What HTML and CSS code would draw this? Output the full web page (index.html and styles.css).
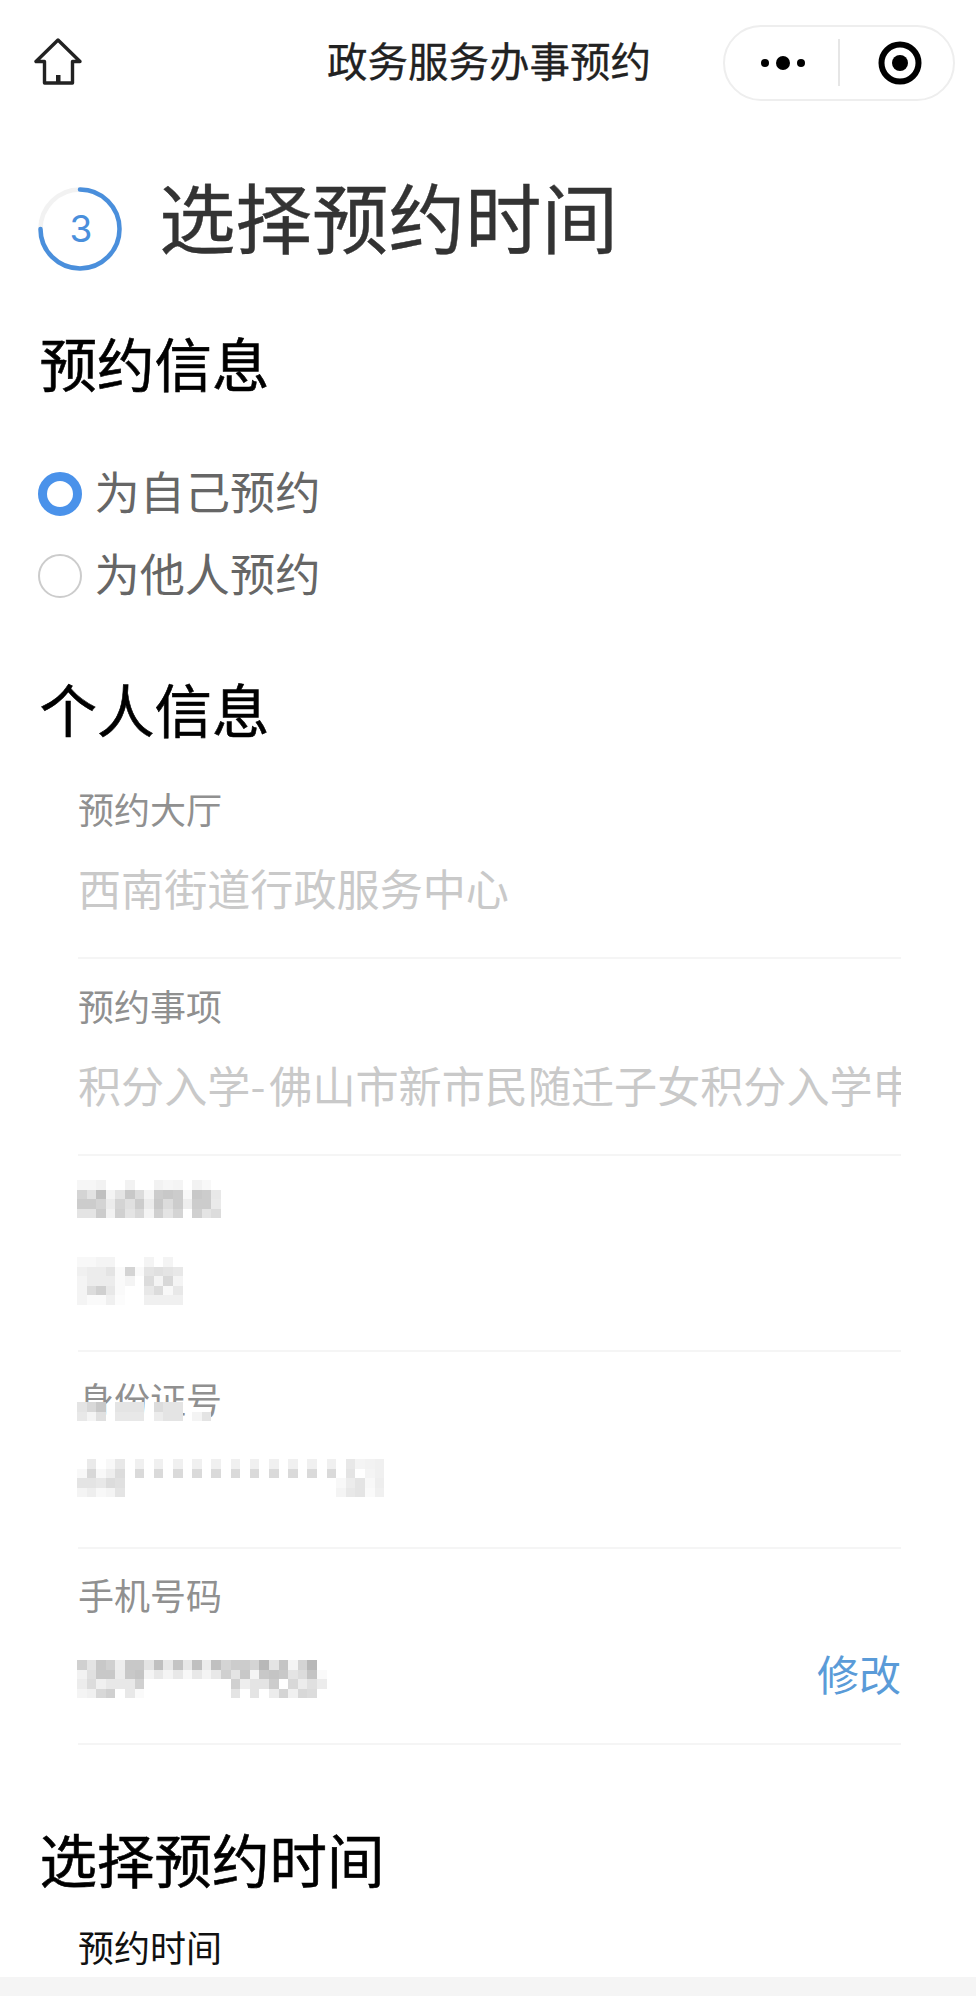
FILE: index.html
```html
<!DOCTYPE html>
<html lang="zh-CN">
<head>
<meta charset="utf-8">
<title>政务服务办事预约</title>
<link rel="stylesheet" href="styles.css">
</head>
<body>
<div class="page">
  <header class="navbar">
    <svg class="home-icon" viewBox="0 0 50 48" width="50" height="48" aria-hidden="true">
      <path class="home-outline" d="M25 2 L3 23.5 H11.5 V45 H39.5 V23.5 H47 Z"/>
      <rect class="home-door" x="23" y="37" width="4.5" height="8"/>
    </svg>
    <div class="nav-title">政务服务办事预约</div>
    <div class="capsule">
      <svg class="capsule-dots" viewBox="0 0 48 16" width="48" height="16" aria-hidden="true">
        <circle cx="6" cy="8" r="4"/><circle cx="24" cy="8" r="7"/><circle cx="42" cy="8" r="4"/>
      </svg>
      <span class="capsule-sep"></span>
      <svg class="capsule-target" viewBox="0 0 44 44" width="44" height="44" aria-hidden="true">
        <circle class="target-ring" cx="22" cy="22" r="18.5"/><circle cx="22" cy="22" r="8"/>
      </svg>
    </div>
  </header>

  <div class="step">
    <svg class="step-ring" viewBox="0 0 84 84" width="84" height="84" aria-hidden="true">
      <circle class="ring-track" cx="42" cy="42" r="39.5"/>
      <path class="ring-arc" d="M42 2.5 A39.5 39.5 0 1 1 2.5 42"/>
      <text class="ring-num" x="43" y="55">3</text>
    </svg>
    <h1 class="step-title">选择预约时间</h1>
  </div>

  <h2 class="section-title section-first">预约信息</h2>
  <div class="radio-group">
    <div class="radio-row"><span class="radio radio-on"></span><span class="radio-text">为自己预约</span></div>
    <div class="radio-row"><span class="radio"></span><span class="radio-text">为他人预约</span></div>
  </div>

  <h2 class="section-title section-personal">个人信息</h2>
  <div class="fields">
    <div class="field">
      <div class="field-label">预约大厅</div>
      <div class="field-value">西南街道行政服务中心</div>
    </div>
    <div class="field">
      <div class="field-label">预约事项</div>
      <div class="field-value">积分入学<span class="dash">-</span>佛山市新市民随迁子女积分入学申请</div>
    </div>
    <div class="field">
      <div class="field-label"></div>
      <div class="field-value"></div>
      <svg class="mosaic m1" viewBox="0 0 15 4" aria-hidden="true">
        <rect x="0" y="0" fill="#f6f6f6"/><rect x="1" y="0" fill="#f6f6f6"/><rect x="2" y="0" fill="#f2f2f2"/><rect x="5" y="0" fill="#f2f2f2"/><rect x="8" y="0" fill="#f2f2f2"/><rect x="9" y="0" fill="#f6f6f6"/><rect x="10" y="0" fill="#f4f4f4"/><rect x="12" y="0" fill="#f2f2f2"/><rect x="13" y="0" fill="#f8f8f8"/>
        <rect x="0" y="1" fill="#d4d4d4"/><rect x="1" y="1" fill="#e2e2e2"/><rect x="2" y="1" fill="#c0c0c0"/><rect x="3" y="1" fill="#f4f4f4"/><rect x="4" y="1" fill="#e4e4e4"/><rect x="5" y="1" fill="#c8c8c8"/><rect x="6" y="1" fill="#dcdcdc"/><rect x="7" y="1" fill="#f4f4f4"/><rect x="8" y="1" fill="#cccccc"/><rect x="9" y="1" fill="#c8c8c8"/><rect x="10" y="1" fill="#cccccc"/><rect x="11" y="1" fill="#f8f8f8"/><rect x="12" y="1" fill="#c8c8c8"/><rect x="13" y="1" fill="#cccccc"/><rect x="14" y="1" fill="#e8e8e8"/>
        <rect x="0" y="2" fill="#cccccc"/><rect x="1" y="2" fill="#cccccc"/><rect x="2" y="2" fill="#d4d4d4"/><rect x="3" y="2" fill="#ececec"/><rect x="4" y="2" fill="#d4d4d4"/><rect x="5" y="2" fill="#e0e0e0"/><rect x="6" y="2" fill="#cccccc"/><rect x="7" y="2" fill="#ececec"/><rect x="8" y="2" fill="#c8c8c8"/><rect x="9" y="2" fill="#dcdcdc"/><rect x="10" y="2" fill="#cccccc"/><rect x="11" y="2" fill="#eeeeee"/><rect x="12" y="2" fill="#cccccc"/><rect x="13" y="2" fill="#cccccc"/><rect x="14" y="2" fill="#eaeaea"/>
        <rect x="0" y="3" fill="#e4e4e4"/><rect x="1" y="3" fill="#e4e4e4"/><rect x="2" y="3" fill="#cccccc"/><rect x="3" y="3" fill="#f2f2f2"/><rect x="4" y="3" fill="#d0d0d0"/><rect x="5" y="3" fill="#e4e4e4"/><rect x="6" y="3" fill="#d8d8d8"/><rect x="7" y="3" fill="#f4f4f4"/><rect x="8" y="3" fill="#d0d0d0"/><rect x="9" y="3" fill="#e4e4e4"/><rect x="10" y="3" fill="#d4d4d4"/><rect x="12" y="3" fill="#d0d0d0"/><rect x="13" y="3" fill="#e4e4e4"/><rect x="14" y="3" fill="#dcdcdc"/>
      </svg>
      <svg class="mosaic m2" viewBox="0 0 11 5" aria-hidden="true">
        <rect x="0" y="0" fill="#f8f8f8"/><rect x="1" y="0" fill="#f8f8f8"/><rect x="2" y="0" fill="#f4f4f4"/><rect x="3" y="0" fill="#f4f4f4"/><rect x="7" y="0" fill="#f4f4f4"/><rect x="9" y="0" fill="#f4f4f4"/>
        <rect x="0" y="1" fill="#f0f0f0"/><rect x="1" y="1" fill="#ececec"/><rect x="2" y="1" fill="#ececec"/><rect x="3" y="1" fill="#e4e4e4"/><rect x="4" y="1" fill="#fafafa"/><rect x="5" y="1" fill="#d4d4d4"/><rect x="6" y="1" fill="#fafafa"/><rect x="7" y="1" fill="#e4e4e4"/><rect x="8" y="1" fill="#e0e0e0"/><rect x="9" y="1" fill="#e4e4e4"/><rect x="10" y="1" fill="#e8e8e8"/>
        <rect x="0" y="2" fill="#f4f4f4"/><rect x="1" y="2" fill="#ececec"/><rect x="2" y="2" fill="#ececec"/><rect x="3" y="2" fill="#ececec"/><rect x="4" y="2" fill="#fafafa"/><rect x="5" y="2" fill="#f4f4f4"/><rect x="7" y="2" fill="#dcdcdc"/><rect x="8" y="2" fill="#f4f4f4"/><rect x="9" y="2" fill="#d8d8d8"/><rect x="10" y="2" fill="#f4f4f4"/>
        <rect x="0" y="3" fill="#f4f4f4"/><rect x="1" y="3" fill="#dcdcdc"/><rect x="2" y="3" fill="#d0d0d0"/><rect x="3" y="3" fill="#e8e8e8"/><rect x="4" y="3" fill="#fafafa"/><rect x="7" y="3" fill="#e8e8e8"/><rect x="8" y="3" fill="#dcdcdc"/><rect x="9" y="3" fill="#f8f8f8"/><rect x="10" y="3" fill="#e8e8e8"/>
        <rect x="0" y="4" fill="#f4f4f4"/><rect x="1" y="4" fill="#fafafa"/><rect x="2" y="4" fill="#fafafa"/><rect x="3" y="4" fill="#f0f0f0"/><rect x="4" y="4" fill="#fcfcfc"/><rect x="7" y="4" fill="#f0f0f0"/><rect x="8" y="4" fill="#f0f0f0"/><rect x="9" y="4" fill="#f0f0f0"/><rect x="10" y="4" fill="#f0f0f0"/>
      </svg>
    </div>
    <div class="field">
      <div class="field-label">身份证号</div>
      <div class="field-value"></div>
      <svg class="mosaic m3" viewBox="0 0 14 2" aria-hidden="true">
        <rect x="0" y="0" fill="#e4e4e4"/><rect x="1" y="0" fill="#d8d8d8"/><rect x="2" y="0" fill="#c8c8c8"/><rect x="4" y="0" fill="#e4e4e4"/><rect x="5" y="0" fill="#e4e4e4"/><rect x="6" y="0" fill="#e4e4e4"/><rect x="8" y="0" fill="#dcdcdc"/><rect x="9" y="0" fill="#e4e4e4"/><rect x="10" y="0" fill="#e4e4e4"/>
        <rect x="0" y="1" fill="#e8e8e8"/><rect x="1" y="1" fill="#f4f4f4"/><rect x="2" y="1" fill="#e0e0e0"/><rect x="4" y="1" fill="#e8e8e8"/><rect x="5" y="1" fill="#e8e8e8"/><rect x="6" y="1" fill="#e8e8e8"/><rect x="8" y="1" fill="#ececec"/><rect x="9" y="1" fill="#e4e4e4"/><rect x="10" y="1" fill="#e4e4e4"/><rect x="12" y="1" fill="#f4f4f4"/><rect x="13" y="1" fill="#e4e4e4"/>
      </svg>
      <svg class="mosaic m4" viewBox="0 0 32 4" aria-hidden="true">
        <rect x="1" y="0" fill="#eaeaea"/><rect x="3" y="0" fill="#f8f8f8"/><rect x="4" y="0" fill="#e8e8e8"/><rect x="6" y="0" fill="#f0f0f0"/><rect x="8" y="0" fill="#f0f0f0"/><rect x="10" y="0" fill="#f0f0f0"/><rect x="12" y="0" fill="#f0f0f0"/><rect x="14" y="0" fill="#f0f0f0"/><rect x="16" y="0" fill="#f0f0f0"/><rect x="18" y="0" fill="#f0f0f0"/><rect x="20" y="0" fill="#f0f0f0"/><rect x="22" y="0" fill="#f0f0f0"/><rect x="24" y="0" fill="#f0f0f0"/><rect x="26" y="0" fill="#f0f0f0"/><rect x="28" y="0" fill="#e8e8e8"/><rect x="29" y="0" fill="#f4f4f4"/><rect x="30" y="0" fill="#f2f2f2"/><rect x="31" y="0" fill="#f0f0f0"/>
        <rect x="0" y="1" fill="#f8f8f8"/><rect x="1" y="1" fill="#d8d8d8"/><rect x="2" y="1" fill="#f8f8f8"/><rect x="3" y="1" fill="#eeeeee"/><rect x="4" y="1" fill="#dcdcdc"/><rect x="6" y="1" fill="#dadada"/><rect x="8" y="1" fill="#dadada"/><rect x="10" y="1" fill="#dadada"/><rect x="12" y="1" fill="#dadada"/><rect x="14" y="1" fill="#dadada"/><rect x="16" y="1" fill="#dadada"/><rect x="18" y="1" fill="#dadada"/><rect x="20" y="1" fill="#dadada"/><rect x="22" y="1" fill="#dadada"/><rect x="24" y="1" fill="#dadada"/><rect x="26" y="1" fill="#dadada"/><rect x="28" y="1" fill="#e4e4e4"/><rect x="30" y="1" fill="#f4f4f4"/><rect x="31" y="1" fill="#f0f0f0"/>
        <rect x="0" y="2" fill="#e4e4e4"/><rect x="1" y="2" fill="#e4e4e4"/><rect x="2" y="2" fill="#e8e8e8"/><rect x="3" y="2" fill="#dcdcdc"/><rect x="4" y="2" fill="#e0e0e0"/><rect x="27" y="2" fill="#f8f8f8"/><rect x="28" y="2" fill="#ececec"/><rect x="29" y="2" fill="#e4e4e4"/><rect x="30" y="2" fill="#f8f8f8"/><rect x="31" y="2" fill="#eeeeee"/>
        <rect x="0" y="3" fill="#f4f4f4"/><rect x="1" y="3" fill="#eeeeee"/><rect x="2" y="3" fill="#f8f8f8"/><rect x="3" y="3" fill="#f4f4f4"/><rect x="4" y="3" fill="#e4e4e4"/><rect x="27" y="3" fill="#f4f4f4"/><rect x="28" y="3" fill="#e8e8e8"/><rect x="29" y="3" fill="#e4e4e4"/><rect x="30" y="3" fill="#fafafa"/><rect x="31" y="3" fill="#f0f0f0"/>
      </svg>
    </div>
    <div class="field">
      <div class="field-label">手机号码</div>
      <div class="field-value field-value-row"><span></span><span class="field-action">修改</span></div>
      <svg class="mosaic m5" viewBox="0 0 26 4" aria-hidden="true">
        <rect x="0" y="0" fill="#d0d0d0"/><rect x="1" y="0" fill="#e4e4e4"/><rect x="2" y="0" fill="#c8c8c8"/><rect x="3" y="0" fill="#d0d0d0"/><rect x="4" y="0" fill="#eeeeee"/><rect x="5" y="0" fill="#c8c8c8"/><rect x="6" y="0" fill="#c8c8c8"/><rect x="7" y="0" fill="#e4e4e4"/><rect x="8" y="0" fill="#c0c0c0"/><rect x="9" y="0" fill="#e8e8e8"/><rect x="10" y="0" fill="#c4c4c4"/><rect x="11" y="0" fill="#e8e8e8"/><rect x="12" y="0" fill="#c0c0c0"/><rect x="13" y="0" fill="#ececec"/><rect x="14" y="0" fill="#c0c0c0"/><rect x="15" y="0" fill="#d4d4d4"/><rect x="16" y="0" fill="#cccccc"/><rect x="17" y="0" fill="#cccccc"/><rect x="18" y="0" fill="#d4d4d4"/><rect x="19" y="0" fill="#b8b8b8"/><rect x="20" y="0" fill="#e4e4e4"/><rect x="21" y="0" fill="#c4c4c4"/><rect x="22" y="0" fill="#f4f4f4"/><rect x="23" y="0" fill="#d4d4d4"/><rect x="24" y="0" fill="#b8b8b8"/>
        <rect x="0" y="1" fill="#f2f2f2"/><rect x="1" y="1" fill="#e0e0e0"/><rect x="2" y="1" fill="#c8c8c8"/><rect x="3" y="1" fill="#c8c8c8"/><rect x="4" y="1" fill="#ececec"/><rect x="5" y="1" fill="#c8c8c8"/><rect x="6" y="1" fill="#c4c4c4"/><rect x="7" y="1" fill="#f4f4f4"/><rect x="8" y="1" fill="#e8e8e8"/><rect x="9" y="1" fill="#f4f4f4"/><rect x="10" y="1" fill="#e8e8e8"/><rect x="11" y="1" fill="#f8f8f8"/><rect x="12" y="1" fill="#e8e8e8"/><rect x="13" y="1" fill="#f4f4f4"/><rect x="14" y="1" fill="#e8e8e8"/><rect x="15" y="1" fill="#d0d0d0"/><rect x="16" y="1" fill="#e4e4e4"/><rect x="17" y="1" fill="#c8c8c8"/><rect x="18" y="1" fill="#f4f4f4"/><rect x="19" y="1" fill="#c8c8c8"/><rect x="20" y="1" fill="#c4c4c4"/><rect x="21" y="1" fill="#c8c8c8"/><rect x="22" y="1" fill="#e4e4e4"/><rect x="23" y="1" fill="#dcdcdc"/><rect x="24" y="1" fill="#c4c4c4"/><rect x="25" y="1" fill="#fafafa"/>
        <rect x="0" y="2" fill="#ececec"/><rect x="1" y="2" fill="#dcdcdc"/><rect x="2" y="2" fill="#f0f0f0"/><rect x="3" y="2" fill="#e8e8e8"/><rect x="4" y="2" fill="#e8e8e8"/><rect x="5" y="2" fill="#e8e8e8"/><rect x="6" y="2" fill="#d0d0d0"/><rect x="16" y="2" fill="#d0d0d0"/><rect x="17" y="2" fill="#eeeeee"/><rect x="18" y="2" fill="#e4e4e4"/><rect x="19" y="2" fill="#e4e4e4"/><rect x="20" y="2" fill="#cccccc"/><rect x="22" y="2" fill="#d8d8d8"/><rect x="23" y="2" fill="#ececec"/><rect x="24" y="2" fill="#e0e0e0"/><rect x="25" y="2" fill="#ececec"/>
        <rect x="0" y="3" fill="#f4f4f4"/><rect x="1" y="3" fill="#f0f0f0"/><rect x="2" y="3" fill="#d8d8d8"/><rect x="3" y="3" fill="#d0d0d0"/><rect x="5" y="3" fill="#e8e8e8"/><rect x="6" y="3" fill="#fafafa"/><rect x="16" y="3" fill="#e4e4e4"/><rect x="18" y="3" fill="#e4e4e4"/><rect x="20" y="3" fill="#ececec"/><rect x="21" y="3" fill="#d4d4d4"/><rect x="22" y="3" fill="#f0f0f0"/><rect x="23" y="3" fill="#d8d8d8"/><rect x="24" y="3" fill="#dcdcdc"/>
      </svg>
    </div>
  </div>

  <h2 class="section-title section-time">选择预约时间</h2>
  <div class="time-label">预约时间</div>
  <footer class="bottom-bar"></footer>
</div>
</body>
</html>
```

FILE: styles.css
```css
html, body {
  margin: 0;
  padding: 0;
  background: #fff;
}

body {
  font-family: "Noto Sans CJK SC", "Noto Sans", sans-serif;
}

.page {
  width: 976px;
  height: 1996px;
  overflow: hidden;
  background: #fff;
}

/* navigation bar */
.navbar {
  height: 125px;
  display: grid;
  grid-template-columns: 1fr auto 1fr;
  align-items: center;
}

.home-icon {
  justify-self: start;
  margin-left: 33px;
  margin-top: -1px;
}

.home-outline {
  fill: none;
  stroke: #222;
  stroke-width: 3.4;
  stroke-linejoin: round;
}

.home-door {
  fill: #222;
}

.nav-title {
  margin: -5px 0 0 2px;
  font-size: 40.5px;
  line-height: 50px;
  color: #222;
  white-space: nowrap;
  -webkit-text-stroke: 0.3px #222;
}

.capsule {
  justify-self: end;
  margin-right: 21px;
  box-sizing: border-box;
  width: 232px;
  height: 76px;
  border: 2px solid #eeeeee;
  border-radius: 38px;
  display: grid;
  grid-template-columns: 1fr 2px 1fr;
  align-items: center;
  justify-items: center;
}

.capsule-dots {
  fill: #000;
  margin-left: 2px;
}

.capsule-sep {
  width: 2px;
  height: 47px;
  background: #e6e6e6;
}

.capsule-target {
  fill: #000;
  margin-left: 6px;
}

.target-ring {
  fill: none;
  stroke: #000;
  stroke-width: 6;
}

/* step heading */
.step {
  display: flex;
  align-items: flex-start;
  gap: 37px;
  margin-top: 52px;
  padding-left: 38px;
}

.step-ring {
  margin-top: 10px;
  flex: none;
}

.ring-track {
  fill: none;
  stroke: #f2f2f2;
  stroke-width: 4.5;
}

.ring-arc {
  fill: none;
  stroke: #4a8fdc;
  stroke-width: 4.5;
  stroke-linecap: round;
}

.ring-num {
  font-family: Inter, "Liberation Sans", sans-serif;
  font-size: 37px;
  fill: #4a8fdc;
  text-anchor: middle;
}

.step-title {
  margin: 0;
  font-size: 76.5px;
  line-height: 76px;
  font-weight: 400;
  color: #333;
  white-space: nowrap;
  -webkit-text-stroke: 0.4px #333;
}

/* sections */
.section-title {
  margin: 0 0 0 39.5px;
  font-size: 57.5px;
  line-height: 57px;
  font-weight: 400;
  color: #000;
  -webkit-text-stroke: 0.6px #000;
}

.section-first {
  margin-top: 63px;
}

.section-personal {
  margin-top: 82px;
}

.section-time {
  margin-top: 85px;
}

/* radios */
.radio-group {
  margin: 80.5px 0 0 38px;
  display: flex;
  flex-direction: column;
  gap: 38.5px;
}

.radio-row {
  display: flex;
  align-items: center;
  height: 44px;
  gap: 12.5px;
}

.radio {
  box-sizing: border-box;
  width: 44px;
  height: 44px;
  border-radius: 50%;
  border: 2.5px solid #cccccc;
  background: #fff;
}

.radio-on {
  border: 9.5px solid #4a92ea;
}

.radio-text {
  padding-bottom: 6px;
  font-size: 45.2px;
  line-height: 50px;
  color: #666;
  white-space: nowrap;
}

/* field list */
.fields {
  margin: 25.5px 75px 0 78px;
}

.field {
  position: relative;
  box-sizing: border-box;
  height: 196.5px;
  padding-top: 27.5px;
  border-bottom: 2px solid #f5f5f5;
}

.field-label {
  height: 36px;
  font-size: 36px;
  line-height: 36px;
  color: #909090;
  white-space: nowrap;
}

.field-value {
  height: 62px;
  margin-top: 30px;
  font-size: 43.1px;
  line-height: 62px;
  color: #c9c9c9;
  white-space: nowrap;
  overflow: hidden;
}

.dash {
  margin-right: 4px;
}

.field-value-row {
  display: flex;
  justify-content: space-between;
}

.field-action {
  font-size: 42px;
  color: #5a9bd8;
}

/* privacy mosaics laid over the field text */
.mosaic {
  position: absolute;
  left: -1px;
  display: block;
  shape-rendering: crispEdges;
  filter: blur(0.6px);
}

.mosaic rect {
  width: 1px;
  height: 1px;
}

.m1 { top: 24.5px; width: 144px; height: 38.4px; }
.m2 { top: 101.5px; width: 105.6px; height: 48px; }
.m3 { top: 50px; width: 134.4px; height: 19.2px; }
.m4 { top: 107px; width: 307.2px; height: 38.4px; }
.m5 { top: 111.5px; width: 249.6px; height: 38.4px; }

.time-label {
  margin: 40.5px 0 0 78px;
  font-size: 36px;
  line-height: 36px;
  color: #111;
}

.bottom-bar {
  margin-top: 13.5px;
  height: 19px;
  background: #f5f5f5;
}
```
